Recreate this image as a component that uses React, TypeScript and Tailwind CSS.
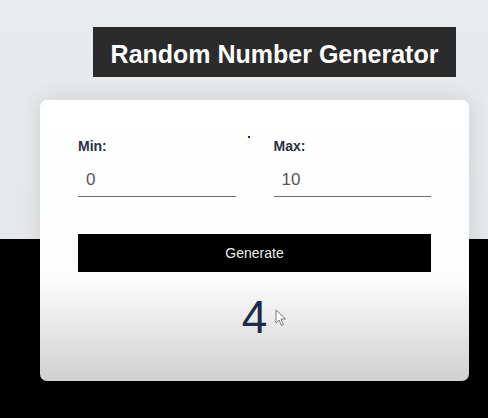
export default function App() {
  return (
    <div className="w-[488px] h-[418px] overflow-hidden relative bg-[linear-gradient(to_bottom,#e8ebed_0px,#e6e9eb_239px,#000_239px)] font-['Liberation_Sans',Arial,sans-serif]">
      <div className="flex flex-col pt-[27px]">
        <div className="ml-[93px] w-[363px] h-[50px] bg-[#2b2b2b] flex items-center justify-center">
          <h1 className="text-white font-bold text-[25px] leading-none pt-[5px]">Random Number Generator</h1>
        </div>

        <div className="ml-[40px] mt-[23px] w-[429px] h-[281px] rounded-[7px] bg-[linear-gradient(to_bottom,#ffffff_0%,#fdfdfd_63%,#d0d0d0_100%)] shadow-[0_0_22px_rgba(0,0,0,0.12)] px-[38px] pt-[36px] relative">
          <span className="absolute left-[208px] top-[36px] w-[2px] h-[2px] bg-[#1010ff]" />
          <div className="grid grid-cols-2 gap-x-[38px]">
            <div className="flex flex-col">
              <label className="text-[14px] leading-[20px] font-bold text-[#2a3140]">Min:</label>
              <div className="mt-[4px] h-[37px] border-b border-[#6b6b6b] pl-[8px] pt-[3px] flex items-center text-[17px] text-[#555]">0</div>
            </div>
            <div className="flex flex-col">
              <label className="text-[14px] leading-[20px] font-bold text-[#2a3140]">Max:</label>
              <div className="mt-[4px] h-[37px] border-b border-[#6b6b6b] pl-[8px] pt-[3px] flex items-center text-[17px] text-[#555]">10</div>
            </div>
          </div>

          <button className="mt-[37px] w-full h-[38px] bg-black text-[#eee] text-[14px] flex items-center justify-center">
            Generate
          </button>

          <div className="mt-[20px] flex justify-center relative">
            <span className="text-[46px] leading-[50px] text-[#1f2a48]">4</span>
            <svg className="absolute left-[197px] top-[17px]" width="12" height="18" viewBox="0 0 12 18">
              <path d="M1 1 L1 14 L4 11 L6.5 16.5 L8.5 15.5 L6 10 L10.5 10 Z" fill="#fff" stroke="#777" strokeWidth="1" strokeLinejoin="round" />
            </svg>
          </div>
        </div>
      </div>
    </div>
  )
}
